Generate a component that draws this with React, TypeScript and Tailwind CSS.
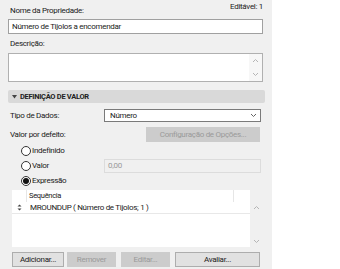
import React from "react";

const font = { fontFamily: "Roboto, 'Liberation Sans', sans-serif", letterSpacing: "-0.3px" };

const Up = () => (
  <svg width="7" height="5" viewBox="0 0 7 5">
    <path d="M1 4 L3.5 1.5 L6 4" fill="none" stroke="#b5b5b5" strokeWidth="1" />
  </svg>
);

const Down = () => (
  <svg width="7" height="5" viewBox="0 0 7 5">
    <path d="M1 1 L3.5 3.5 L6 1" fill="none" stroke="#b5b5b5" strokeWidth="1" />
  </svg>
);

const Radio = ({ checked, label }: { checked?: boolean; label: string }) => (
  <div className="flex items-center gap-[1px]">
    <div className="w-[10px] h-[10px] rounded-full border border-[#333] bg-white flex items-center justify-center">
      {checked && <div className="w-[6px] h-[6px] rounded-full bg-[#111]" />}
    </div>
    <span>{label}</span>
  </div>
);

const Btn = ({ label, disabled, w }: { label: string; disabled?: boolean; w: string }) => (
  <div
    className={
      "h-[15px] flex items-center justify-center " +
      w +
      (disabled
        ? " bg-[#cccccc] text-[#9a9a9a]"
        : " bg-[#e1e1e1] border border-[#adadad] text-[#1a1a1a]")
    }
  >
    {label}
  </div>
);

export default function App() {
  return (
    <div className="flex w-[340px] h-[269px] bg-white overflow-hidden text-[8px] text-[#1a1a1a]" style={font}>
      <div className="w-[272px] h-full bg-[#f0f0f0] flex flex-col pl-[8px] pr-[9px]">
        {/* name */}
        <div className="flex justify-between items-end h-[19px] pb-[2px]">
          <span className="pl-[2px]">Nome da Propriedade:</span>
          <span className="pb-[4px] text-[#222]">Editável: 1</span>
        </div>
        <div className="h-[15px] bg-white border border-[#a0a0a0] flex items-center pl-[3px]">
          Número de Tijolos a encomendar
        </div>

        {/* description */}
        <div className="h-[19px] flex items-center pl-[2px]">Descrição:</div>
        <div className="h-[29px] bg-white border border-[#b0b0b0] flex justify-end">
          <div className="w-[13px] bg-[#f7f7f7] flex flex-col items-center justify-between py-[4px]">
            <Up />
            <Down />
          </div>
        </div>

        {/* section header */}
        <div className="h-[13px] mt-[8px] mr-[-2px] bg-[#d9d9d9] rounded-[2px] flex items-center pl-[4px] gap-[3px] font-bold text-[7.5px] text-[#222]">
          <svg width="5" height="4" viewBox="0 0 5 4">
            <path d="M0 0 H5 L2.5 3.5 Z" fill="#444" />
          </svg>
          <span>DEFINIÇÃO DE VALOR</span>
        </div>

        {/* tipo de dados */}
        <div className="flex items-center mt-[6px] h-[13px]">
          <span className="w-[96px] pl-[2px]">Tipo de Dados:</span>
          <div className="flex-1 h-[13px] mr-[2px] bg-white border border-[#7a7a7a] flex items-center justify-between pl-[5px] pr-[3px]">
            <span>Número</span>
            <svg width="7" height="5" viewBox="0 0 7 5">
              <path d="M1 1 L3.5 3.5 L6 1" fill="none" stroke="#555" strokeWidth="0.9" />
            </svg>
          </div>
        </div>

        {/* valor por defeito */}
        <div className="flex items-center justify-between mt-[5px] h-[15px]">
          <span className="pl-[2px]">Valor por defeito:</span>
          <div className="w-[114px] mr-[3px] h-[15px] bg-[#cccccc] text-[#9a9a9a] flex items-center justify-center">
            Configuração de Opções...
          </div>
        </div>

        {/* radios */}
        <div className="pl-[13px] mt-[2px] h-[14px] flex items-center">
          <Radio label="Indefinido" />
        </div>
        <div className="flex items-center h-[14px] mt-[1px]">
          <div className="w-[96px] pl-[13px]">
            <Radio label="Valor" />
          </div>
          <div className="flex-1 mr-[2px] h-[14px] border border-[#dcdcdc] flex items-center pl-[3px] text-[#9a9a9a]">
            0,00
          </div>
        </div>
        <div className="pl-[13px] mt-[1px] h-[14px] flex items-center">
          <Radio checked label="Expressão" />
        </div>

        {/* table */}
        <div className="flex ml-[4px] mt-[2px] h-[57px] mr-[1px]">
          <div className="w-[238px] bg-white flex flex-col">
            <div className="h-[12px] flex text-[7.5px]">
              <div className="w-[15px] border-r border-[#e6e6e6]" />
              <div className="flex-1 flex items-center pl-[2px] border-r border-[#e6e6e6]">Sequência</div>
              <div className="w-[16px]" />
            </div>
            <div className="h-[12px] flex items-center border-b border-[#e8e8e8]">
              <div className="w-[15px] flex justify-center">
                <svg width="5" height="7" viewBox="0 0 5 7">
                  <path d="M0.5 2.5 L2.5 0.5 L4.5 2.5 Z M0.5 4.5 L2.5 6.5 L4.5 4.5 Z" fill="#444" />
                </svg>
              </div>
              <span className="pl-[3px]">MROUNDUP ( Número de Tijolos; 1 )</span>
            </div>
          </div>
          <div className="flex-1 flex flex-col items-center justify-between pt-[15px] pb-[3px]">
            <Up />
            <Down />
          </div>
        </div>

        {/* buttons */}
        <div className="flex mt-[5px] ml-[4px]">
          <Btn label="Adicionar..." w="w-[52px]" />
          <div className="w-[3px]" />
          <Btn label="Remover" disabled w="w-[49px]" />
          <div className="w-[5px]" />
          <Btn label="Editar..." disabled w="w-[49px]" />
          <div className="w-[5px]" />
          <Btn label="Avaliar..." w="w-[85px]" />
        </div>
      </div>
    </div>
  );
}
